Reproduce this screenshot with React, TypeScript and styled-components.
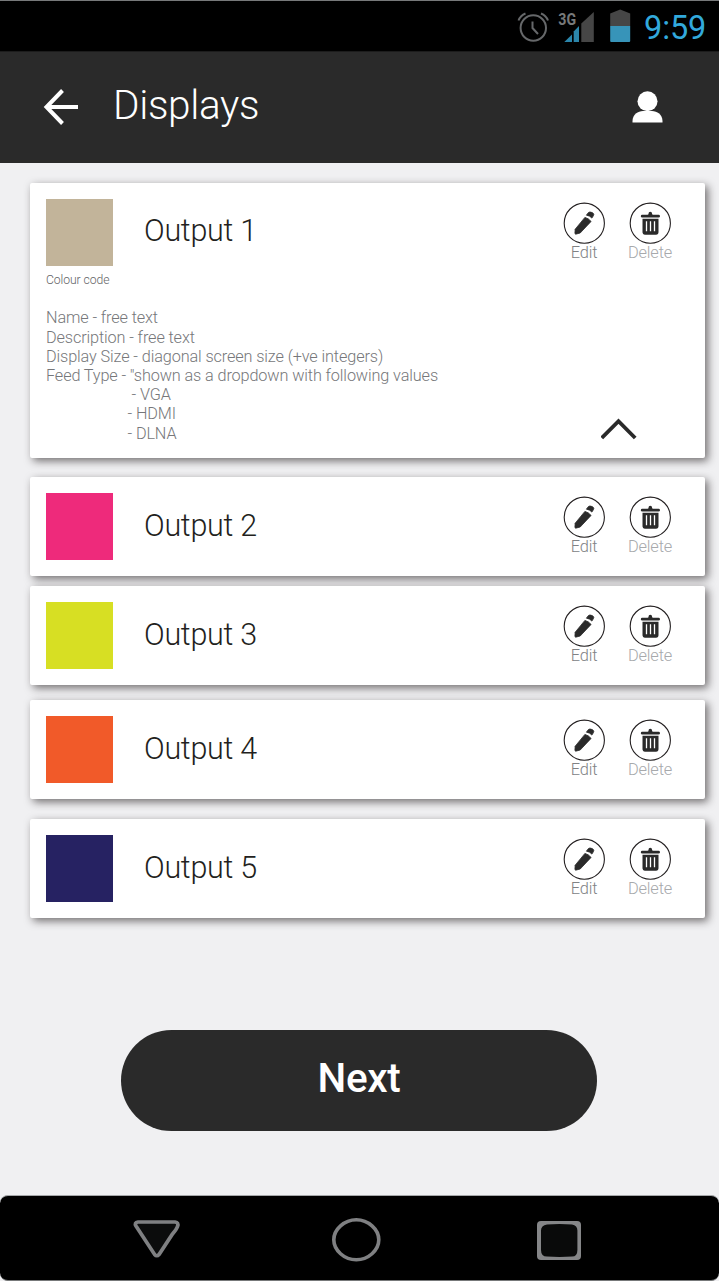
import React from "react";
import styled, { createGlobalStyle } from "styled-components";

const GlobalStyle = createGlobalStyle`
  *, *::before, *::after { box-sizing: border-box; }
  body { margin: 0; background: #fff; font-family: Roboto, "Liberation Sans", sans-serif; }
  button { font: inherit; border: 0; padding: 0; background: none; cursor: pointer; }
  svg { display: block; flex: none; }
`;

const Screen = styled.div`
  width: 719px;
  height: 1281px;
  display: flex;
  flex-direction: column;
  background: #f0f0f2;
  overflow: hidden;
`;

const StatusBar = styled.div`
  height: 52px;
  flex: none;
  display: flex;
  align-items: flex-start;
  justify-content: flex-end;
  padding: 8px 13px 0 0;
  background: #000;
  border-top: 1px solid #77797a;
  border-bottom: 1px solid #1c1c1c;
`;

const Clock = styled.time`
  width: 62px;
  margin-left: 12px;
  font-size: 32.5px;
  line-height: 38px;
  letter-spacing: -0.1px;
  color: #32a9dc;
  white-space: nowrap;
`;

const Header = styled.header`
  height: 111px;
  flex: none;
  display: flex;
  align-items: center;
  padding: 0 56px 2px 42px;
  background: #2a2a2a;
`;

const Title = styled.h1`
  flex: 1;
  margin: 0 0 3px 34px;
  font-size: 40.5px;
  line-height: 48px;
  letter-spacing: -0.35px;
  font-weight: 300;
  color: #fff;
`;

const List = styled.main`
  display: flex;
  flex-direction: column;
  padding: 20px 14px 0 30px;
`;

const Card = styled.section<{ $height: number; $gap: number }>`
  height: ${(p) => p.$height}px;
  margin-bottom: ${(p) => p.$gap}px;
  display: flex;
  flex-direction: column;
  padding: 16px 32px 0 16px;
  background: #fff;
  border-radius: 2px;
  box-shadow: 3px 3px 8px rgba(35, 31, 32, 0.62);
`;

const CardTop = styled.div`
  display: flex;
  align-items: flex-start;
`;

const Swatch = styled.div<{ $color: string }>`
  width: 67px;
  height: 67px;
  background: ${(p) => p.$color};
`;

const Name = styled.h2<{ $raised?: boolean }>`
  flex: 1;
  margin: ${(p) => (p.$raised ? 14 : 15)}px 0 0 31px;
  font-size: 30.5px;
  line-height: 36px;
  letter-spacing: -0.27px;
  font-weight: 300;
  color: #231f20;
`;

const Action = styled.button<{ $faint?: boolean }>`
  width: 46px;
  margin: 3px 0 0 20px;
  display: flex;
  flex-direction: column;
  align-items: center;
  font-size: 16.4px;
  line-height: 18px;
  letter-spacing: -0.15px;
  font-weight: 300;
  color: ${(p) => (p.$faint ? "#a7a9ac" : "#808285")};
`;

const Caption = styled.div`
  margin-top: 7px;
  font-size: 12.2px;
  line-height: 14px;
  letter-spacing: -0.08px;
  font-weight: 300;
  color: #636466;
`;

const Details = styled.div`
  display: flex;
  justify-content: space-between;
  align-items: flex-start;
  margin-top: 21px;
`;

const Spec = styled.div`
  padding-top: 0.4px;
  font-size: 16.25px;
  line-height: 19.2px;
  letter-spacing: -0.12px;
  font-weight: 300;
  color: #76777a;
  white-space: nowrap;
`;

const SpecLine = styled.div<{ $indent?: number }>`
  padding-left: ${(p) => p.$indent ?? 0}px;
`;

const Collapse = styled.button`
  margin: 110px 36px 0 0;
`;

const NextButton = styled.button`
  width: 476px;
  height: 101px;
  margin: 112px 0 0 121px;
  flex: none;
  padding-bottom: 5px;
  border-radius: 51px;
  background: #2a2a2a;
  color: #fff;
  font-size: 40.5px;
  letter-spacing: -0.3px;
  font-weight: 500;
`;

const NavBar = styled.nav`
  height: 86px;
  margin-top: auto;
  flex: none;
  display: flex;
  padding: 21px 0 0 132px;
  background: #000;
  border-top: 1px solid #a5a7a9;
  border-bottom: 1px solid #77797a;
  border-radius: 8px;
`;

const StatusIcons = () => (
  <svg width="116" height="36" viewBox="516 9 116 36">
    <g fill="none" stroke="#66686a" strokeWidth="2">
      <circle cx="533.3" cy="28" r="12.7" />
      <path d="M532.5 21.5V28l5.5 6" />
      <path d="M518.5 20.5q2-5 7-7M541 13.5q5 2 7 7" />
    </g>
    <text x="558.3" y="24.8" fontSize="17" fontWeight="700" fill="#77797a" textLength="17.800" lengthAdjust="spacingAndGlyphs">3G</text>
    <path d="M564.3 42l7.700-7.500v7.500z" fill="#2b86ab" />
    <path d="M573.7 42V31.500l5.300-5.500V42z" fill="#2b86ab" />
    <path d="M581.3 42V23.500L593.800 12v30z" fill="#464646" />
    <path d="M610.2 26V13.5l10-4 10 4V26z" fill="#464646" />
    <path d="M610.2 26h20v15q0 1-1 1h-18q-1 0-1-1z" fill="#3794b9" />
  </svg>
);

const BackIcon = () => (
  <svg width="37" height="38" viewBox="0 0 37 38" fill="none" stroke="#fff" strokeWidth="4">
    <path d="M20.5 2.5L4.5 19l16 16.5M4 19h32" />
  </svg>
);

const UserIcon = () => (
  <svg width="31" height="32" viewBox="0 0 31 32" fill="#fff">
    <circle cx="15.5" cy="10.2" r="10" />
    <path d="M.5 31.5v-1.5C.5 23.5 6 20 11 20h9c5 0 10.5 3.5 10.5 10v1.5z" />
  </svg>
);

const PencilIcon = () => (
  <svg width="42" height="42" viewBox="0 0 42 42">
    <circle cx="21.3" cy="21.2" r="20.1" fill="none" stroke="#231f20" strokeWidth="1.1" />
    <g fill="#2a2a2a" stroke="#2a2a2a" strokeWidth=".8" strokeLinejoin="round">
      <path d="M21.900 15.400q3.300.700 6.200 4L17.200 31l-4.500 1.200-.8-.7.3-4.300z" />
      <path d="M23.400 13.200l1.700-2.300q.9-1.100 2.400-.8 2 .3 3 1.500.6.900 0 1.900l-1.600 2.600q-2-2.600-5.500-2.900z" />
    </g>
  </svg>
);

const TrashIcon = () => (
  <svg width="42" height="42" viewBox="0 0 42 42">
    <circle cx="21.3" cy="21.2" r="20.1" fill="none" stroke="#231f20" strokeWidth="1.1" />
    <rect x="11.9" y="12.7" width="19" height="2.700" rx="1.200" fill="#2a2a2a" />
    <path d="M18.500 13.100q1-.3 1-1.400 0-2 1.800-2t1.800 2q0 1.100 1 1.400z" fill="#2a2a2a" />
    <path d="M13.500 16.800h16v13q0 3-2.500 3H16q-2.500 0-2.500-3z" fill="#2a2a2a" />
    <path d="M17.500 19.300v10M21.500 19.300v10M25.500 19.300v10" stroke="#fff" strokeWidth="1.300" />
  </svg>
);

const ChevronUp = () => (
  <svg width="36" height="22" viewBox="0 0 36 22" fill="none" stroke="#2a2a2a" strokeWidth="3.8">
    <path d="M.8 20L17.5 3.2 34.200 20" />
  </svg>
);

const NavIcons = () => (
  <svg width="452" height="46" viewBox="132 1217 452 46" fill="none" stroke="#7f8082">
    <path d="M138 1222h37q4 .5 2.5 4.5-1 3-5 7.5L159 1254.5q-2.2 2.5-4.4 0L136 1226q-2-3.500 2-4z" fill="#0b0c0c" strokeWidth="3.7" />
    <path d="M356.300 1219.800c12 0 22.500 9.500 22.500 20s-10.500 20-22.500 20-22.500-9.500-22.500-20 10.500-20 22.500-20z" strokeWidth="3.600" />
    <rect x="537" y="1221" width="44" height="39" rx="4" fill="#858688" stroke="none" />
    <path d="M547 1224.500q12.500-1.200 25 0 5.400.8 5.400 6v19.500q0 6.500-5.400 6.600-12.500.8-25 0-6-.1-6-6.600v-19.500q0-5.200 6-6z" fill="#090a0a" stroke="none" />
  </svg>
);

const outputs = [
  { name: "Output 1", color: "#c2b49a", height: 275, gap: 19, open: true },
  { name: "Output 2", color: "#ee2a7b", height: 99, gap: 10 },
  { name: "Output 3", color: "#d7df23", height: 99, gap: 15 },
  { name: "Output 4", color: "#f15a29", height: 99, gap: 20 },
  { name: "Output 5", color: "#262262", height: 99, gap: 0 },
];

const specs = [
  { text: "Name - free text" },
  { text: "Description - free text" },
  { text: "Display Size - diagonal screen size (+ve integers)" },
  { text: 'Feed Type - "shown as a dropdown with following values' },
  { text: "- VGA", indent: 85.5 },
  { text: "- HDMI", indent: 81.5 },
  { text: "- DLNA", indent: 81.5 },
];

export default function App() {
  return (
    <>
      <GlobalStyle />
      <Screen>
        <StatusBar>
          <StatusIcons />
          <Clock>9:59</Clock>
        </StatusBar>
        <Header>
          <BackIcon />
          <Title>Displays</Title>
          <UserIcon />
        </Header>
        <List>
          {outputs.map((o) => (
            <Card key={o.name} $height={o.height} $gap={o.gap}>
              <CardTop>
                <Swatch $color={o.color} />
                <Name $raised={o.open}>{o.name}</Name>
                <Action>
                  <PencilIcon />
                  Edit
                </Action>
                <Action $faint>
                  <TrashIcon />
                  Delete
                </Action>
              </CardTop>
              {o.open && (
                <>
                  <Caption>Colour code</Caption>
                  <Details>
                    <Spec>
                      {specs.map((s) => (
                        <SpecLine key={s.text} $indent={s.indent}>{s.text}</SpecLine>
                      ))}
                    </Spec>
                    <Collapse aria-label="Collapse">
                      <ChevronUp />
                    </Collapse>
                  </Details>
                </>
              )}
            </Card>
          ))}
        </List>
        <NextButton>Next</NextButton>
        <NavBar>
          <NavIcons />
        </NavBar>
      </Screen>
    </>
  );
}
